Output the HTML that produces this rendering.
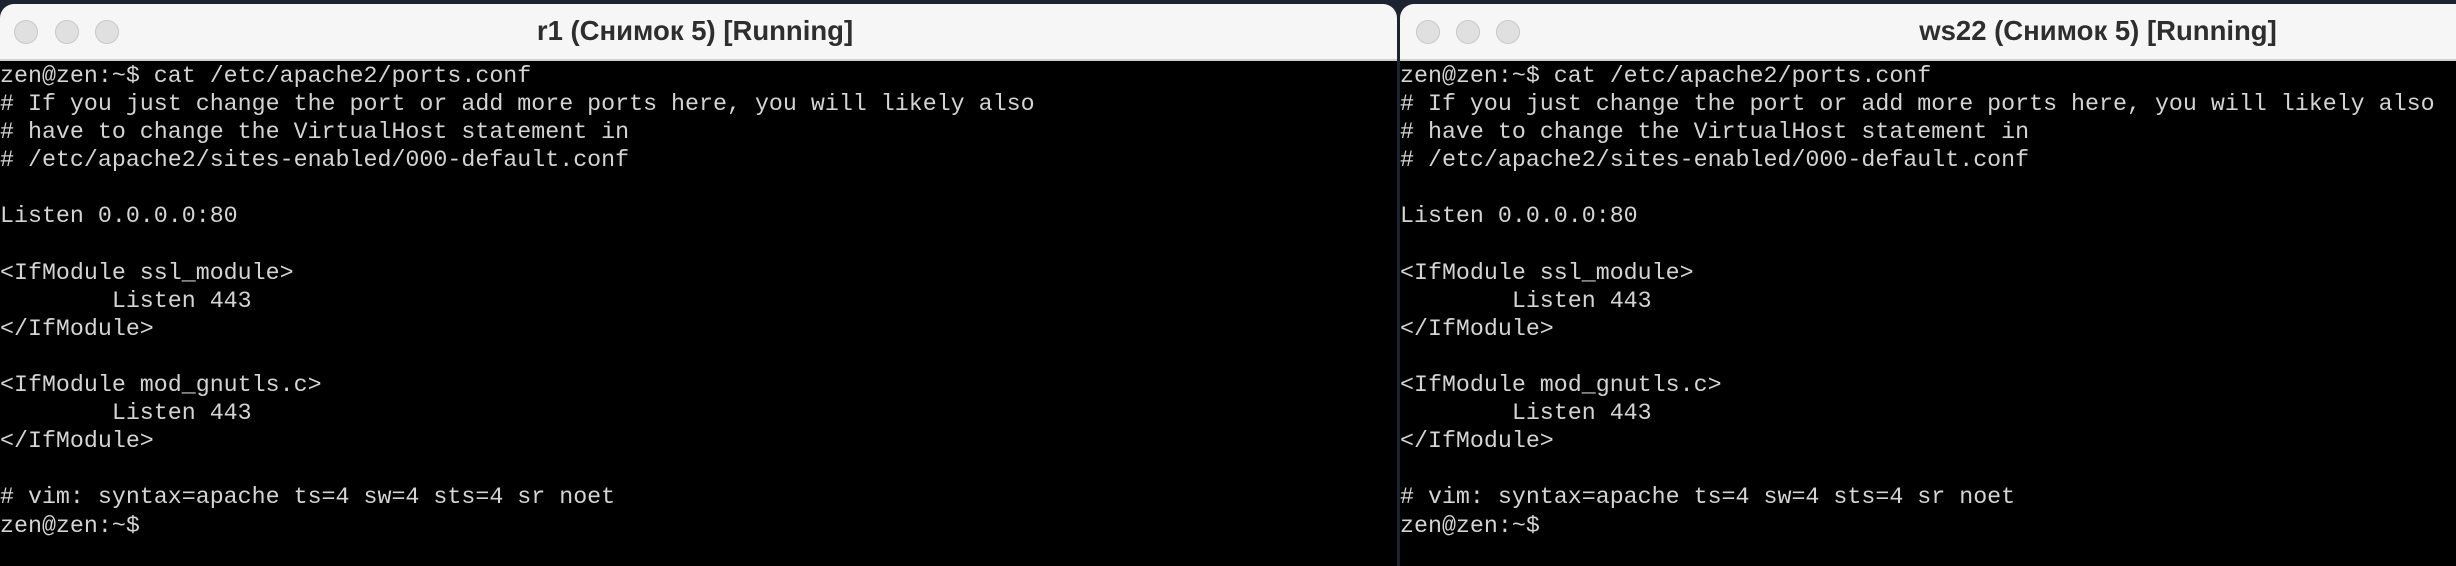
<!DOCTYPE html>
<html><head><meta charset="utf-8"><style>
html,body{margin:0;padding:0;width:2456px;height:566px;background:#1d2330;overflow:hidden;position:relative}
.win{position:absolute;top:4px;height:570px;background:#000;border-radius:14px 14px 0 0;overflow:hidden}
.bar{position:absolute;left:0;right:0;top:0;height:55px;background:#f6f6f6;border-bottom:2px solid #cfcfcf}
.dot{position:absolute;top:16px;width:22px;height:22px;border-radius:50%;background:#e0e0e0;border:1px solid #c8c8c8}
.title{position:absolute;top:11px;font:bold 27.5px "Liberation Sans","Noto Sans CJK SC",sans-serif;color:#2e2e2e;white-space:nowrap;transform:translateX(-50%)}
pre{position:absolute;left:0;top:58px;margin:0;font:23.3px/28.1px "Liberation Mono",monospace;color:#d4d4d4}
</style></head><body>
<div class="win" style="left:0;width:1397px">
 <div class="bar"><div class="dot" style="left:14px"></div><div class="dot" style="left:55px"></div><div class="dot" style="left:95px"></div>
 <div class="title" style="left:695px">r1 (Снимок 5) [Running]</div></div>
<pre>zen@zen:~$ cat /etc/apache2/ports.conf
# If you just change the port or add more ports here, you will likely also
# have to change the VirtualHost statement in
# /etc/apache2/sites-enabled/000-default.conf

Listen 0.0.0.0:80

&lt;IfModule ssl_module&gt;
        Listen 443
&lt;/IfModule&gt;

&lt;IfModule mod_gnutls.c&gt;
        Listen 443
&lt;/IfModule&gt;

# vim: syntax=apache ts=4 sw=4 sts=4 sr noet
zen@zen:~$</pre>
</div>
<div class="win" style="left:1400px;width:1070px">
 <div class="bar"><div class="dot" style="left:16px"></div><div class="dot" style="left:56px"></div><div class="dot" style="left:96px"></div>
 <div class="title" style="left:698px">ws22 (Снимок 5) [Running]</div></div>
<pre>zen@zen:~$ cat /etc/apache2/ports.conf
# If you just change the port or add more ports here, you will likely also
# have to change the VirtualHost statement in
# /etc/apache2/sites-enabled/000-default.conf

Listen 0.0.0.0:80

&lt;IfModule ssl_module&gt;
        Listen 443
&lt;/IfModule&gt;

&lt;IfModule mod_gnutls.c&gt;
        Listen 443
&lt;/IfModule&gt;

# vim: syntax=apache ts=4 sw=4 sts=4 sr noet
zen@zen:~$</pre>
</div>
</body></html>
